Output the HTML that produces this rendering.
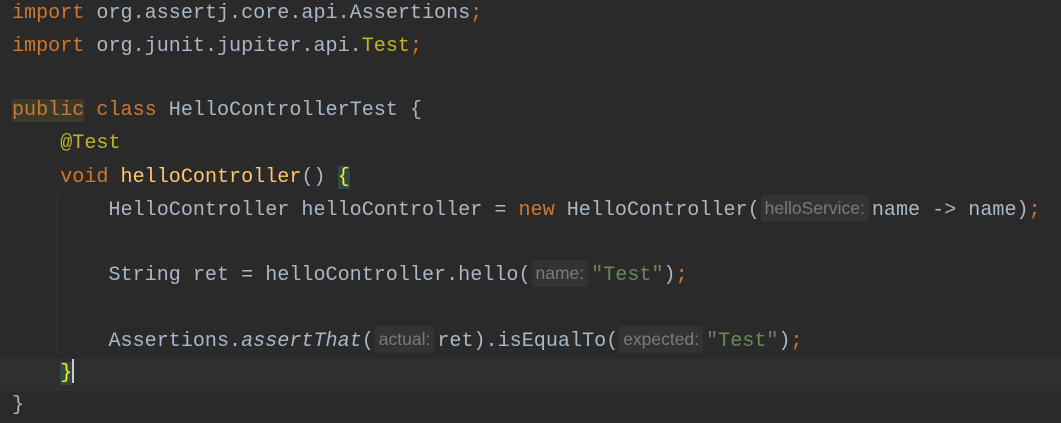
<!DOCTYPE html>
<html><head><style>
html,body{margin:0;padding:0;}
body{width:1061px;height:417px;background:#2a2a2a;overflow:hidden;position:relative;font-family:"Liberation Mono",monospace;font-size:20.1px;color:#a9b7c6;}
.l{position:absolute;left:12px;height:32.7px;line-height:32.7px;white-space:pre;}
.k{color:#cc7832}.a{color:#bbb529}.m{color:#ffc66d}.s{color:#6a8759}.i{font-style:italic}
.h{display:inline-block;font-family:"Liberation Sans",sans-serif;font-size:17.5px;color:#7a7a7a;background:#333333;border-radius:4px;padding:0 4px;line-height:27px;margin:0 3px 0 1px;vertical-align:1px}
.cur{position:absolute;left:0;top:358px;width:1061px;height:33px;background:#2f2f2f}
.g{position:absolute;left:57px;width:1px;background:#383838}
</style></head><body>
<div class="cur"></div>
<div class="g" style="top:195px;height:160px"></div>
<div class="l" style="top:-2px"><span class="k">import</span> org.assertj.core.api.Assertions<span class="k">;</span></div>
<div class="l" style="top:31px"><span class="k">import</span> org.junit.jupiter.api.<span class="a">Test</span><span class="k">;</span></div>
<div class="l" style="top:95px"><span class="k" style="background:#3b3a2c">public</span> <span class="k">class</span> HelloControllerTest {</div>
<div class="l" style="top:128px">    <span class="a">@Test</span></div>
<div class="l" style="top:162px">    <span class="k">void</span> <span class="m">helloController</span>() <span style="color:#ffef28;background:#2f4a44">{</span></div>
<div class="l" style="top:195px">        HelloController helloController = <span class="k">new</span> HelloController(<span class="h">helloService:</span>name -&gt; name)<span class="k">;</span></div>
<div class="l" style="top:260px">        String ret = helloController.hello(<span class="h">name:</span><span class="s">"Test"</span>)<span class="k">;</span></div>
<div class="l" style="top:326px">        Assertions.<span class="i">assertThat</span>(<span class="h">actual:</span>ret).isEqualTo(<span class="h">expected:</span><span class="s">"Test"</span>)<span class="k">;</span></div>
<div class="l" style="top:358px">    <span style="color:#ffef28;background:#2f4a44">}</span><span style="display:inline-block;width:2px;height:24px;background:#ccc;vertical-align:-5px"></span></div>
<div class="l" style="top:390px">}</div>
</body></html>
